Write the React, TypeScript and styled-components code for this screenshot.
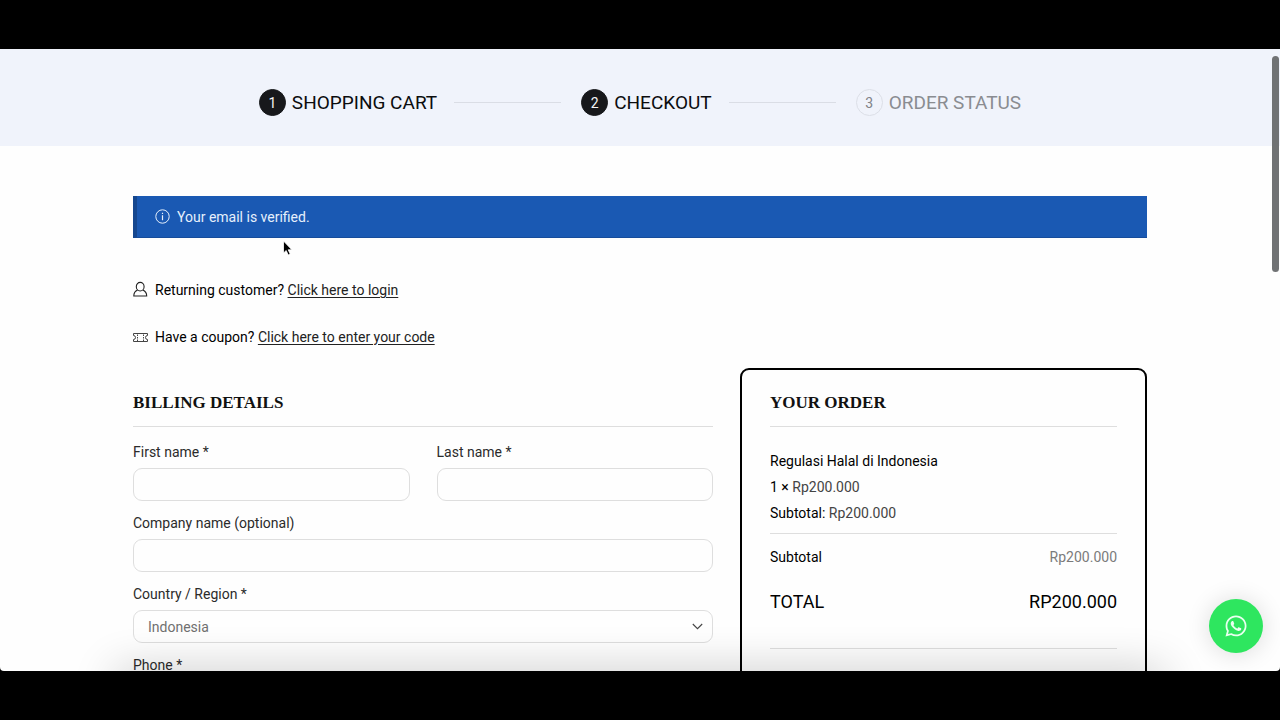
import React from "react";
import styled, { createGlobalStyle } from "styled-components";
import { FaWhatsapp } from "react-icons/fa";

const GlobalStyle = createGlobalStyle`
  *, *::before, *::after { box-sizing: border-box; }
  body {
    margin: 0;
    background: #000;
    color: #000;
    font: 400 14px/22px Roboto, "Liberation Sans", sans-serif;
  }
`;

const Frame = styled.div`
  height: 100vh;
  padding: 49px 0;
  background: #000;
`;

const Screen = styled.div`
  position: relative;
  height: 100%;
  overflow: hidden;
  background: #fefefe;
  border-radius: 0 0 4px 4px;
`;

const StepsBar = styled.nav`
  height: 97px;
  display: flex;
  align-items: center;
  justify-content: center;
  padding-top: 10px;
  background: #f0f3fb;
`;

const StepList = styled.ol`
  list-style: none;
  margin: 0;
  padding: 0;
  display: flex;
  align-items: center;
`;

const Step = styled.li<{ $muted?: boolean }>`
  display: flex;
  align-items: center;
  font-size: 19px;
  line-height: 27px;
  white-space: nowrap;
  color: ${(p) => (p.$muted ? "#8a8c91" : "#0b0c0e")};

  &:not(:last-child)::after {
    content: "";
    width: 107px;
    height: 1px;
    margin: 0 20px 0 17px;
    background: #dadde5;
  }
`;

const StepNumber = styled.span<{ $muted?: boolean }>`
  width: 27px;
  height: 27px;
  margin-right: 6px;
  display: grid;
  place-items: center;
  border-radius: 50%;
  border: 1px solid ${(p) => (p.$muted ? "#dcdfe7" : "#17181b")};
  background: ${(p) => (p.$muted ? "transparent" : "#17181b")};
  color: ${(p) => (p.$muted ? "#808287" : "#f3f4f6")};
  font-size: 14px;
`;

const Main = styled.main`
  max-width: 1014px;
  margin: 0 auto;
  padding-top: 50px;
`;

const Notice = styled.div`
  height: 42px;
  margin-bottom: 41px;
  padding-left: 18px;
  display: flex;
  align-items: center;
  gap: 7px;
  background: #1a59b3;
  border-left: 4px solid #15478f;
  border-bottom: 1px solid #164c9b;
  color: #e6f0fc;
`;

const Prompt = styled.div`
  height: 22px;
  margin-bottom: 25px;
  display: flex;
  align-items: center;
  gap: 7px;

  svg { flex: none; }
`;

const PromptLink = styled.a`
  color: #222;
  text-decoration: underline;
  text-underline-offset: 2px;
`;

const Columns = styled.div`
  display: grid;
  grid-template-columns: minmax(0, 1fr) 407px;
  gap: 27px;
  margin-top: -5px;
`;

const Billing = styled.form`
  padding-top: 23px;
`;

const Order = styled.section`
  height: 500px;
  padding: 21px 28px;
  border: 2px solid #000;
  border-radius: 9px;
`;

const Title = styled.h2`
  margin: 0;
  padding-bottom: 11px;
  border-bottom: 1px solid #dedede;
  font: 700 17px/24px "Liberation Serif", serif;
  color: #111;
`;

const Fields = styled.div`
  padding-top: 14px;
  display: grid;
  grid-template-columns: 1fr 1fr;
  gap: 11px 27px;
`;

const Field = styled.div<{ $wide?: boolean }>`
  display: flex;
  flex-direction: column;
  gap: 5px;
  grid-column: ${(p) => (p.$wide ? "1 / -1" : "auto")};
`;

const Label = styled.label`
  color: #2b2b2b;
`;

const Input = styled.input`
  width: 100%;
  height: 33px;
  padding: 0 14px;
  border: 1px solid #dedede;
  border-radius: 9px;
  background: transparent;
  font: inherit;
`;

const SelectBox = styled.div`
  position: relative;

  svg {
    position: absolute;
    right: 10px;
    top: 13px;
    pointer-events: none;
  }
`;

const Select = styled.select`
  display: block;
  width: 100%;
  height: 33px;
  padding: 0 14px;
  appearance: none;
  border: 1px solid #dedede;
  border-radius: 9px;
  background: #fefefe;
  color: #707070;
  font: inherit;
`;

const Item = styled.div`
  padding: 21px 0 7px;
  border-bottom: 1px solid #dedede;
`;

const ItemLine = styled.div`
  line-height: 26px;
`;

const Amount = styled.span`
  color: #444;
`;

const Totals = styled.table`
  width: 100%;
  border-collapse: collapse;
  border-bottom: 1px solid #dedede;
`;

const TotalRow = styled.tr<{ $grand?: boolean }>`
  height: ${(p) => (p.$grand ? "68px" : "46px")};
  font-size: ${(p) => (p.$grand ? "18px" : "14px")};
  vertical-align: ${(p) => (p.$grand ? "top" : "middle")};

  th, td { padding: ${(p) => (p.$grand ? "10px 0 0" : "0")}; line-height: 24px; }
  th { font-weight: 400; text-align: left; }
  td { text-align: right; color: ${(p) => (p.$grand ? "#000" : "#7b7b7b")}; }
`;

const BottomShade = styled.div`
  position: absolute;
  left: 120px;
  right: 120px;
  bottom: -24px;
  height: 20px;
  box-shadow: 0 0 44px 4px rgba(0, 0, 0, 0.24);
  pointer-events: none;
`;

const ChatButton = styled.button`
  position: absolute;
  right: 17px;
  bottom: 18px;
  width: 54px;
  height: 54px;
  padding: 0;
  display: grid;
  place-items: center;
  border: 0;
  border-radius: 50%;
  background: #2ee65f;
  color: #e9fff0;
  box-shadow: 0 1px 24px rgba(0, 0, 0, 0.14);
`;

const ScrollThumb = styled.div`
  position: absolute;
  top: 7px;
  right: 1px;
  width: 7px;
  height: 216px;
  border-radius: 4px;
  background: #707274;
`;

const Pointer = styled.svg`
  position: absolute;
  left: 282px;
  top: 191px;
`;

const InfoIcon = () => (
  <svg width="15" height="15" viewBox="0 0 15 15" fill="none" stroke="currentColor" aria-hidden="true">
    <circle cx="7.5" cy="7.5" r="6.7" />
    <path d="M7.5 6.2v5M7.5 3.8v1.2" strokeWidth="1.2" />
  </svg>
);

const PersonIcon = () => (
  <svg width="15" height="18" viewBox="0 0 15 18" fill="none" stroke="#222" strokeWidth="1.1" aria-hidden="true">
    <ellipse cx="7.2" cy="5.7" rx="3.9" ry="4.300" />
    <path d="M4.6 9C2 10.100.8 11.800.8 15h12.900c0-3.200-1.300-4.900-3.900-6" />
  </svg>
);

const TicketIcon = () => (
  <svg width="15" height="12" viewBox="0 0 15 12" fill="none" stroke="#444" strokeWidth="1" aria-hidden="true">
    <path d="M.5 2.500h14v2a1.900 1.900 0 0 0 0 4v2H.5v-2a1.900 1.900 0 0 0 0-4z" />
    <path d="M4.500 3.500v6.500M10.500 3.500v6.500" strokeDasharray="1.500 1" />
  </svg>
);

export default function App() {
  return (
    <Frame>
      <GlobalStyle />
      <Screen>
        <StepsBar aria-label="Checkout progress">
          <StepList>
            <Step><StepNumber>1</StepNumber>SHOPPING CART</Step>
            <Step aria-current="step"><StepNumber>2</StepNumber>CHECKOUT</Step>
            <Step $muted><StepNumber $muted>3</StepNumber>ORDER STATUS</Step>
          </StepList>
        </StepsBar>
        <Main>
          <Notice role="status"><InfoIcon />Your email is verified.</Notice>
          <Prompt>
            <PersonIcon />
            <span>Returning customer? <PromptLink href="#login">Click here to login</PromptLink></span>
          </Prompt>
          <Prompt>
            <TicketIcon />
            <span>Have a coupon? <PromptLink href="#coupon">Click here to enter your code</PromptLink></span>
          </Prompt>
          <Columns>
            <Billing>
              <Title>BILLING DETAILS</Title>
              <Fields>
                <Field>
                  <Label htmlFor="first-name">First name *</Label>
                  <Input id="first-name" />
                </Field>
                <Field>
                  <Label htmlFor="last-name">Last name *</Label>
                  <Input id="last-name" />
                </Field>
                <Field $wide>
                  <Label htmlFor="company">Company name (optional)</Label>
                  <Input id="company" />
                </Field>
                <Field $wide>
                  <Label htmlFor="country">Country / Region *</Label>
                  <SelectBox>
                    <Select id="country" defaultValue="Indonesia">
                      <option>Indonesia</option>
                    </Select>
                    <svg width="11" height="8" viewBox="0 0 11 8" fill="none" stroke="#444" strokeWidth="1.100" aria-hidden="true">
                      <path d="M.8 1l4.700 4.700 4.700-4.700" />
                    </svg>
                  </SelectBox>
                </Field>
                <Field $wide>
                  <Label htmlFor="phone">Phone *</Label>
                  <Input id="phone" type="tel" />
                </Field>
              </Fields>
            </Billing>
            <Order>
              <Title>YOUR ORDER</Title>
              <Item>
                <ItemLine>Regulasi Halal di Indonesia</ItemLine>
                <ItemLine>1 × <Amount>Rp200.000</Amount></ItemLine>
                <ItemLine>Subtotal: <Amount>Rp200.000</Amount></ItemLine>
              </Item>
              <Totals>
                <tbody>
                  <TotalRow><th scope="row">Subtotal</th><td>Rp200.000</td></TotalRow>
                  <TotalRow $grand><th scope="row">TOTAL</th><td>RP200.000</td></TotalRow>
                </tbody>
              </Totals>
            </Order>
          </Columns>
        </Main>
        <BottomShade />
        <ChatButton type="button" aria-label="Chat on WhatsApp"><FaWhatsapp size={24} /></ChatButton>
        <ScrollThumb />
        <Pointer width="12" height="17" viewBox="0 0 12 17" aria-hidden="true">
          <path d="M1.500 1v12l2.700-2.500 2 4.500 2-.9-2-4.300h3.700z" fill="#000" stroke="#fff" strokeWidth=".8" />
        </Pointer>
      </Screen>
    </Frame>
  );
}
